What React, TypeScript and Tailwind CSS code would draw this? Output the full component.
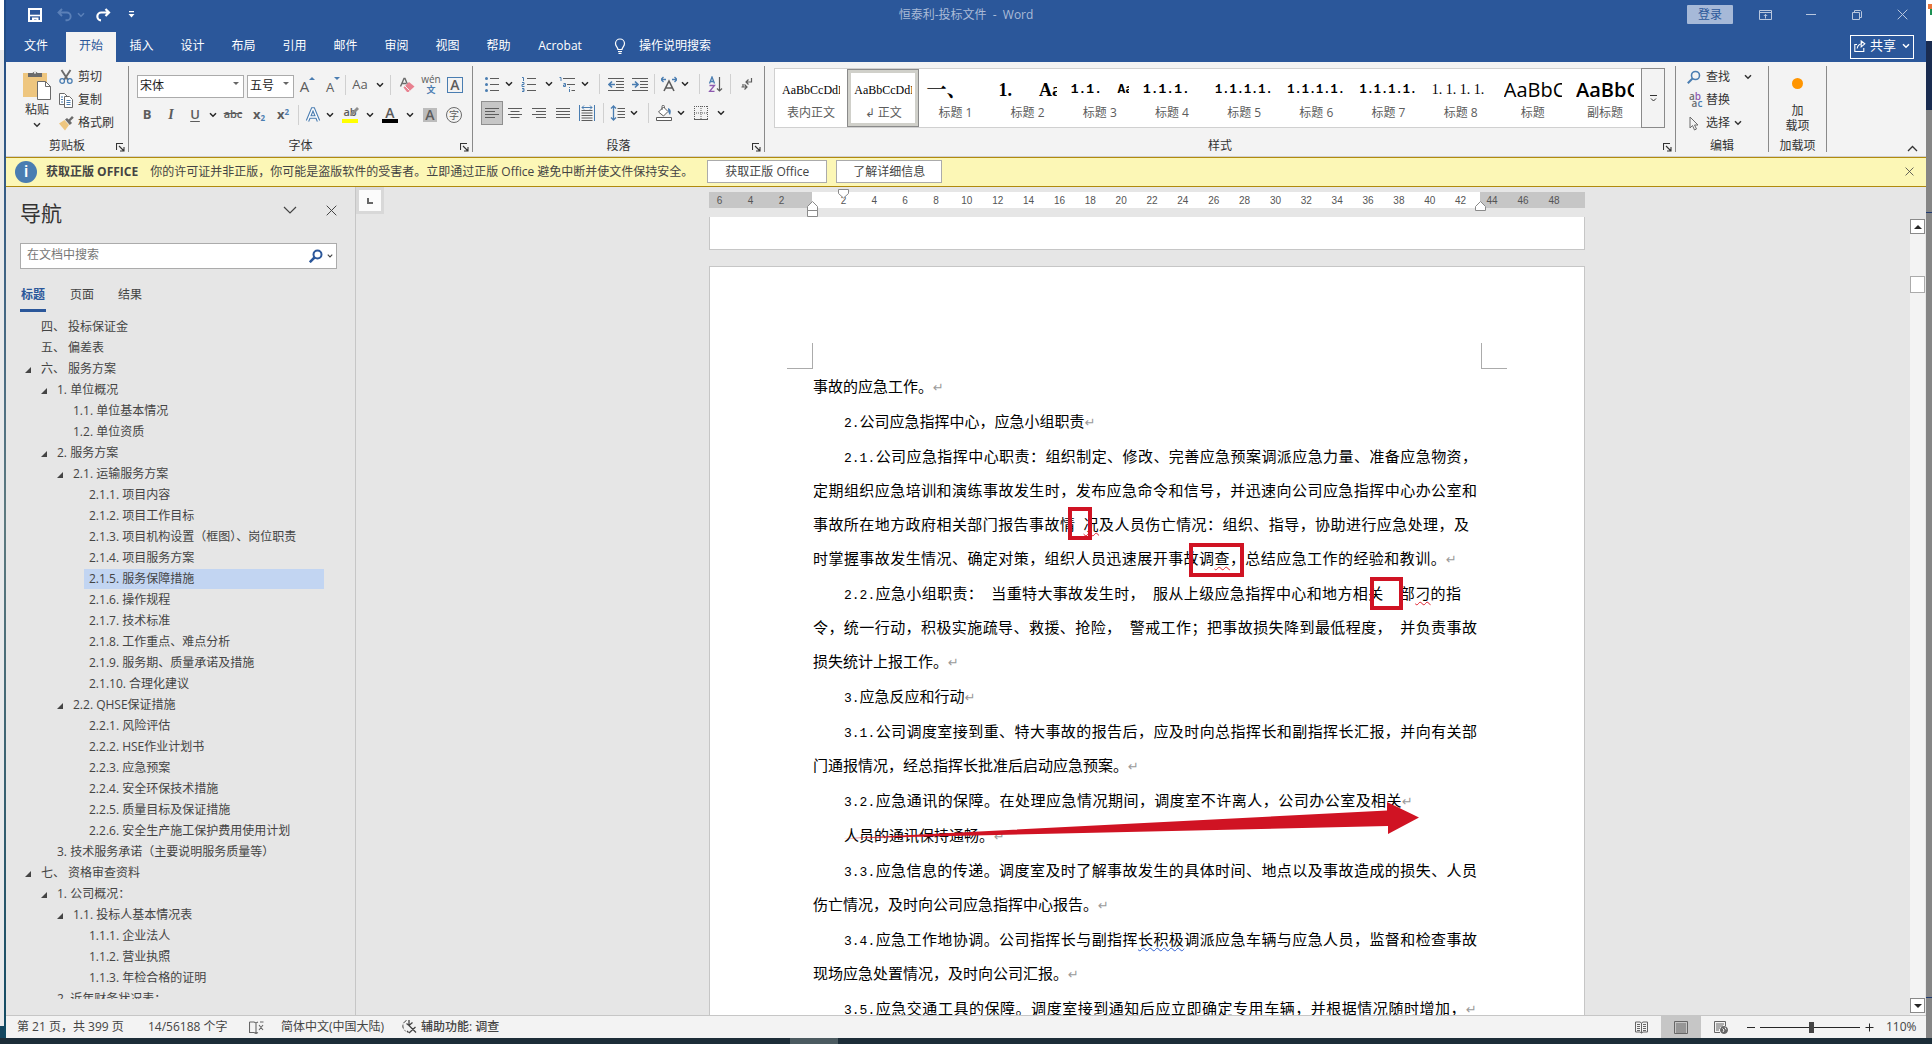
import React from 'react';
import type { ReactNode } from 'react';
import clsx from 'clsx';

/* ---------- small shared pieces ---------- */

function Chev({ className }: { className?: string }) {
  return (
    <svg viewBox="0 0 8 6" className={clsx('h-[6px] w-2 shrink-0', className)} fill="none" stroke="currentColor" strokeWidth="1.5">
      <path d="M1 1.2 4 4.2 7 1.2" />
    </svg>
  );
}

function Caret({ label }: { label: string }) {
  return (
    <button aria-label={label} className="flex h-6 w-3 shrink-0 items-center justify-center text-[#262626]">
      <Chev />
    </button>
  );
}

function Tool({ label, className = 'w-6', children }: { label: string; className?: string; children: ReactNode }) {
  return (
    <button aria-label={label} className={clsx('flex h-6 shrink-0 items-center justify-center text-[#5c5c5c]', className)}>
      {children}
    </button>
  );
}

function Rule({ className }: { className: string }) {
  return <span className={clsx('h-5 w-px shrink-0 bg-[#d0d0d0]', className)} />;
}

function Icon({ children, size = 'size-4', box = '0 0 16 16' }: { children: ReactNode; size?: string; box?: string }) {
  return (
    <svg viewBox={box} className={clsx('shrink-0', size)} fill="none" stroke="currentColor" strokeWidth="1" aria-hidden="true">
      {children}
    </svg>
  );
}

function Launcher() {
  return (
    <button aria-label="更多选项" className="absolute right-[3px] bottom-0 text-[#333]">
      <Icon size="size-[9px]" box="0 0 9 9">
        <path d="M.5 7V.5H7M3 3l4.5 4.5M8 4v4H4" strokeWidth="1.1" />
      </Icon>
    </button>
  );
}

function Group({ title, launcher, className, children }: { title: string; launcher?: boolean; className: string; children: ReactNode }) {
  return (
    <section className={clsx('relative my-1 flex flex-col border-r border-[#8a8a8a]', className)}>
      <div className="flex-1">{children}</div>
      <div className="h-3 text-center text-xs leading-3 text-[#333]">{title}</div>
      {launcher && <Launcher />}
    </section>
  );
}

function CloseIcon({ size = 'size-[11px]' }: { size?: string }) {
  return (
    <Icon size={size} box="0 0 11 11">
      <path d="M.7.7l9.6 9.6M10.3.7.7 10.3" />
    </Icon>
  );
}

function Magnifier({ className, strokeWidth = 2 }: { className: string; strokeWidth?: number }) {
  return (
    <svg viewBox="0 0 14 14" className={className} fill="none" stroke="currentColor" aria-hidden="true">
      <circle cx="8.5" cy="5.5" r="4" strokeWidth={strokeWidth * 0.8} />
      <path d="M5.5 8.5.8 13.2" strokeWidth={strokeWidth} />
    </svg>
  );
}

/* ---------- title bar and tabs ---------- */

function TitleBar() {
  return (
    <header className="relative flex h-8 shrink-0 items-center bg-[#2b579a] pb-[3px] text-white">
      <button aria-label="保存" className="ml-[22px]">
        <Icon size="size-[14px]" box="0 0 14 14">
          <path d="M1 1h12v12H1z" strokeWidth="2" />
          <path d="M2 7.5h10" strokeWidth="1.6" />
          <path d="M5 10v4M4 10.5h5.5V14" strokeWidth="2" />
        </Icon>
      </button>
      <button aria-label="撤消" className="ml-[15px] text-[#5b80b8]">
        <Icon size="h-[14px] w-[15px]" box="0 0 15 14">
          <path d="M5 1 1.5 4.5 5 8M1.8 4.5H9.5a3.8 3.8 0 0 1 .5 7.8H8.5" strokeWidth="1.9" />
        </Icon>
      </button>
      <Chev className="ml-[5px] text-[#5b80b8]" />
      <button aria-label="恢复" className="ml-[11px]">
        <Icon size="h-[14px] w-[15px]" box="0 0 15 14">
          <path d="M9.5 1 13 4.5 9.5 8M13 4.5H5.5a3.8 3.8 0 0 0-.5 7.8" strokeWidth="2.2" />
        </Icon>
      </button>
      <button aria-label="自定义快速访问工具栏" className="ml-[17px]">
        <svg viewBox="0 0 7 7" className="size-[7px]" fill="currentColor">
          <path d="M1 0h5v1.2H1zM.5 3h6L3.5 6.4z" />
        </svg>
      </button>
      <h1 className="absolute inset-x-0 text-center text-xs text-[#aabbd7]">恒泰利-投标文件&nbsp; -&nbsp; Word</h1>
      <div className="relative ml-auto flex items-center text-[#b9c7de]">
        <button className="h-[19px] w-[46px] rounded-[1px] bg-[#a6b9d8] text-xs leading-[18px] text-[#2b579a]">登录</button>
        <button aria-label="功能区显示选项" className="ml-[26px]">
          <Icon size="h-[10px] w-[13px]" box="0 0 13 10">
            <path d="M.5.5h12v9H.5zM.5 2.5h12M6.5 8.5v-4M4.8 6l1.7-1.7L8.2 6" />
          </Icon>
        </button>
        <button aria-label="最小化" className="ml-[34px] h-3 w-[10px]"><span className="block h-px bg-current" /></button>
        <button aria-label="向下还原" className="ml-9">
          <Icon size="size-[10px]" box="0 0 10 10">
            <path d="M.5 2.5h7v7h-7zM2.5 2V.5h6l1 1v6H8" />
          </Icon>
        </button>
        <button aria-label="关闭" className="mr-[18px] ml-[35px]"><CloseIcon size="size-[11px]" /></button>
      </div>
    </header>
  );
}

const TABS = ['插入', '设计', '布局', '引用', '邮件', '审阅', '视图', '帮助'];

function TabRow() {
  return (
    <nav className="flex h-[30px] shrink-0 items-stretch bg-[#2b579a] text-xs text-white">
      <button className="w-[60px] pb-0.5">文件</button>
      <button className="w-[50px] bg-[#f3f3f3] pb-0.5 text-[#2b579a]">开始</button>
      {TABS.map(tab => (
        <button key={tab} className="w-[51px] pb-0.5">{tab}</button>
      ))}
      <button className="w-[72px] pb-0.5">Acrobat</button>
      <button className="ml-[18px] flex items-center gap-[13px] pb-0.5">
        <Icon size="h-4 w-3" box="0 0 12 16">
          <path d="M4 11.5c0-2-2.5-3-2.5-6a4.5 4.5 0 0 1 9 0c0 3-2.5 4-2.5 6zM4 13.5h4M4.5 15.3h3" strokeWidth="1.2" />
        </Icon>
        操作说明搜索
      </button>
      <button className="mt-[3px] mr-3 ml-auto flex h-6 w-16 items-center justify-center gap-1 border border-white pb-0.5 text-[13px]">
        <Icon size="size-3" box="0 0 12 12">
          <path d="M3 4.5H.8v7h9V8M3.2 8.5c.4-3 2.3-4.500 5-4.700M7.200 1l3.600 2.800L7.200 6.800z" strokeWidth="1.1" />
        </Icon>
        共享
        <Chev className="ml-0.5" />
      </button>
    </nav>
  );
}

/* ---------- ribbon ---------- */

function ClipboardGroup() {
  return (
    <Group title="剪贴板" launcher className="w-[123px]">
      <div className="flex">
        <button className="mt-1 ml-3 flex w-[38px] flex-col items-center text-xs leading-4 text-[#333]">
          <svg viewBox="0 0 28 30" className="h-[30px] w-7" aria-hidden="true">
            <path d="M0 3h24v24H0z" fill="#eec67f" />
            <path d="M5 7V3h4.500a3 3 0 0 1 5 0H19v4z" fill="#6b6b6b" />
            <circle cx="12" cy="2.800" r="1" fill="#f3f3f3" />
            <path d="M14.500 11.500h8l5 5v13h-13z" fill="#fff" stroke="#6b6b6b" />
            <path d="M22.500 11.500v5h5" fill="none" stroke="#6b6b6b" />
          </svg>
          <span className="mt-0.5">粘贴</span>
          <Chev className="mt-1" />
        </button>
        <div className="flex flex-col pl-0.5 text-xs text-[#333]">
          <button className="flex h-[22px] items-center gap-1">
            <svg viewBox="0 0 16 16" className="size-4" fill="none" aria-hidden="true">
              <path d="M3.500 1 10 11M12.500 1 6 11" stroke="#6b6b6b" strokeWidth="1.900" />
              <circle cx="4.200" cy="12" r="2.300" stroke="#4a7db1" strokeWidth="1.300" />
              <circle cx="11.800" cy="12" r="2.300" stroke="#4a7db1" strokeWidth="1.300" />
            </svg>
            剪切
          </button>
          <button className="flex h-6 items-center gap-1">
            <svg viewBox="0 0 16 16" className="size-4" fill="#fff" stroke="#6b6b6b" aria-hidden="true">
              <path d="M1.500 1.500h5l3 3v8h-8z" />
              <path d="M6.500 4.500h5l3 3v8h-8z" />
              <path d="M3 5h2M3 7.500h2M3 10h2M8.500 8.500h4M8.500 10.500h4M8.500 12.500h4" stroke="#4a7db1" />
            </svg>
            复制
          </button>
          <button className="flex h-[22px] items-center gap-1">
            <svg viewBox="0 0 16 16" className="size-4" aria-hidden="true">
              <path d="M1 8.500 6.500 5l4.500 5-4 5.500z" fill="#eec67f" />
              <path d="m7 4.500 2-1.500 1.700 1.500L14 1l1.800 1.800-3.500 3.200L14 8l-2.200 2z" fill="#6b6b6b" />
            </svg>
            格式刷
          </button>
        </div>
      </div>
    </Group>
  );
}

function FontGroup() {
  return (
    <Group title="字体" launcher className="w-[344px]">
      <div className="flex items-center pt-[6px] pl-2">
        <div className="relative">
          <select aria-label="字体" defaultValue="宋体" className="h-[23px] w-[107px] appearance-none border border-[#ababab] bg-white pl-0.5 text-xs text-[#222]">
            <option>宋体</option>
          </select>
          <span className="pointer-events-none absolute top-[10px] right-[5px] border-x-[3px] border-t-[3px] border-x-transparent border-t-[#666]" />
        </div>
        <div className="relative ml-[3px]">
          <select aria-label="字号" defaultValue="五号" className="h-[23px] w-[47px] appearance-none border border-[#ababab] bg-white pl-0.5 text-xs text-[#222]">
            <option>五号</option>
          </select>
          <span className="pointer-events-none absolute top-[10px] right-[5px] border-x-[3px] border-t-[3px] border-x-transparent border-t-[#666]" />
        </div>
        <Tool label="增大字号" className="w-[27px]">
          <span className="pt-0.5 text-[15px] leading-4">A</span>
          <span className="mb-3 border-x-[3px] border-b-[3px] border-x-transparent border-b-[#4a7db1]" />
        </Tool>
        <Tool label="减小字号">
          <span className="pt-1 text-[13px] leading-4">A</span>
          <span className="mb-3 border-x-[3px] border-t-[3px] border-x-transparent border-t-[#4a7db1]" />
        </Tool>
        <Rule className="" />
        <Tool label="更改大小写" className="w-7"><span className="text-[13px]">Aa</span></Tool>
        <Caret label="大小写选项" />
        <Rule className="mx-1" />
        <Tool label="清除所有格式">
          <svg viewBox="0 0 16 16" className="size-4" aria-hidden="true">
            <path d="M1.500 9.500 5 1.500h1l2.500 6M3 6.500h4" fill="none" stroke="#6b6b6b" strokeWidth="1.400" />
            <path d="M4.500 10.500 10 5l5.500 4.500-6 5.500H8z" fill="#e8808f" />
            <path d="m6 9 4.500 4.500" stroke="#f3f3f3" />
          </svg>
        </Tool>
        <Tool label="拼音指南">
          <span className="flex flex-col items-center">
            <span className="text-[10px] leading-[9px]">wén</span>
            <span className="text-[9px] leading-[11px] font-bold text-[#4a7db1]">文</span>
          </span>
        </Tool>
        <Tool label="字符边框">
          <span className="size-4 border border-[#4a7db1] text-[14px] leading-[14px] font-semibold">A</span>
        </Tool>
      </div>
      <div className="flex items-center pt-[5px] pl-[6px]">
        <Tool label="加粗"><b className="text-[13px]">B</b></Tool>
        <Tool label="倾斜"><i className="font-['Liberation_Serif'] text-[14px] font-bold">I</i></Tool>
        <Tool label="下划线"><span className="text-[13px] font-semibold underline underline-offset-2">U</span></Tool>
        <Caret label="下划线选项" />
        <Tool label="删除线" className="w-7"><s className="text-[11px] font-semibold">abc</s></Tool>
        <Tool label="下标"><span className="text-[13px] font-bold">x<sub className="text-[8px] text-[#4a7db1]">2</sub></span></Tool>
        <Tool label="上标"><span className="text-[13px] font-bold">x<sup className="text-[8px] text-[#4a7db1]">2</sup></span></Tool>
        <Rule className="mx-[3px]" />
        <Tool label="文本效果" className="w-[22px]">
          <Icon>
            <path d="m2.500 14 5-12h1l5 12M4.500 10h7" stroke="#4a7db1" strokeWidth="3.600" />
            <path d="m2.500 14 5-12h1l5 12M4.500 10h7" stroke="#fff" strokeWidth="1.400" />
          </Icon>
        </Tool>
        <Caret label="文本效果选项" />
        <Tool label="突出显示" className="w-7">
          <span className="relative h-4 w-4 border-b-4 border-[#ffff00] text-[11px] leading-[10px] font-semibold">
            ab
            <svg viewBox="0 0 10 10" className="absolute top-0 -right-px size-[10px]"><path d="M8 0l2 2-6 6-3 1 1-3z" fill="#8c8c8c" /></svg>
          </span>
        </Tool>
        <Caret label="突出显示选项" />
        <Tool label="字体颜色" className="w-7">
          <span className="h-4 w-4 border-b-4 border-black text-[14px] leading-[12px] font-semibold">A</span>
        </Tool>
        <Caret label="字体颜色选项" />
        <Tool label="字符底纹" className="w-7"><span className="h-[14px] w-[14px] bg-[#bcbcbc] text-[14px] leading-[14px] font-semibold">A</span></Tool>
        <Tool label="带圈字符" className="w-5"><span className="size-4 rounded-full border border-[#6b6b6b] text-[10px] leading-[14px]">字</span></Tool>
      </div>
    </Group>
  );
}

function ParagraphGroup() {
  return (
    <Group title="段落" launcher className="w-[292px]">
      <div className="flex items-center pt-[6px] pl-2">
        <Tool label="项目符号" className="w-[22px]">
          <Icon>
            <path d="M6 2.500h9M6 8.500h9M6 14.500h9" />
            <g fill="#4a7db1" stroke="none"><circle cx="2.500" cy="2.500" r="1.500" /><circle cx="2.500" cy="8.500" r="1.500" /><circle cx="2.500" cy="14.500" r="1.500" /></g>
          </Icon>
        </Tool>
        <Caret label="项目符号选项" />
        <Tool label="编号" className="w-7">
          <Icon>
            <path d="M6 2.500h9M6 8.500h9M6 14.500h9" />
            <path d="M1 1.500h1.500V5M1 6.500h2v2H1v2h2.500M1 12.500h2v3H1M1.500 14H3" stroke="#4a7db1" />
          </Icon>
        </Tool>
        <Caret label="编号选项" />
        <Tool label="多级列表">
          <Icon>
            <path d="M4 2.500h12M8 8.500h8M12.500 14.500H16" />
            <path d="M.5 1.500H2V5M4.500 7.500h2v3h-2v-1.500h2M10.500 11v1M10.500 13v3" stroke="#4a7db1" />
          </Icon>
        </Tool>
        <Caret label="多级列表选项" />
        <Rule className="mr-1 ml-2" />
        <Tool label="减少缩进量">
          <Icon>
            <path d="M0 2.500h16M8 5.500h8M8 8.500h8M8 11.500h8M0 14.500h16" />
            <path d="M7 8.500H1.500M4 5.500l-3 3 3 3" stroke="#4a7db1" strokeWidth="1.700" />
          </Icon>
        </Tool>
        <Tool label="增加缩进量">
          <Icon>
            <path d="M0 2.500h16M8 5.500h8M8 8.500h8M8 11.500h8M0 14.500h16" />
            <path d="M0 8.500h5.500M3 5.500l3 3-3 3" stroke="#4a7db1" strokeWidth="1.700" />
          </Icon>
        </Tool>
        <Rule className="mr-1 ml-0.5" />
        <Tool label="中文版式" className="w-5">
          <Icon>
            <path d="m3 15 5-10 5 10M5 12h6" strokeWidth="1.600" />
            <path d="M0 3.500h5M2.500 1 0 3.500 2.500 6M11 3.500h5M13.500 1 16 3.500 13.500 6" stroke="#4a7db1" strokeWidth="1.300" />
          </Icon>
        </Tool>
        <Caret label="中文版式选项" />
        <Rule className="mr-1 ml-2" />
        <Tool label="排序">
          <Icon>
            <path d="m1.500 7.500 2.500-6.500 2.500 6.500M2.500 5.500h3" stroke="#4a7db1" strokeWidth="1.300" />
            <path d="M1.500 9.500h5l-5 6h5" stroke="#8e5bb0" strokeWidth="1.300" />
            <path d="M11.500 1v14M9 12.500l2.500 2.500 2.500-2.500" strokeWidth="1.200" />
          </Icon>
        </Tool>
        <Rule className="mr-1 ml-0.5" />
        <Tool label="显示编辑标记">
          <Icon size="size-3" box="0 0 12 12">
            <path d="M10.500 0v4H5M7.500 1.500 5 4l2.500 2.500M.5 9H6M3.500 6.500 6 9l-2.500 2.500M2 6v2.500" strokeWidth="1.200" />
          </Icon>
        </Tool>
      </div>
      <div className="flex items-center pt-[5px] pl-2">
        <Tool label="左对齐" className="w-[22px] border border-[#8f8f8f] bg-[#c6c6c6]">
          <Icon box="0 0 16 14"><path d="M1 2.500h14M1 5.500h10M1 8.500h14M1 11.500h10" /></Icon>
        </Tool>
        <Tool label="居中"><Icon box="0 0 16 14"><path d="M1 2.500h14M3.500 5.500h9M1 8.500h14M3.500 11.500h9" /></Icon></Tool>
        <Tool label="右对齐"><Icon box="0 0 16 14"><path d="M1 2.500h14M5 5.500h10M1 8.500h14M5 11.500h10" /></Icon></Tool>
        <Tool label="两端对齐"><Icon box="0 0 16 14"><path d="M1 2.500h14M1 5.500h14M1 8.500h14M1 11.500h14" /></Icon></Tool>
        <Tool label="分散对齐">
          <Icon>
            <path d="M2.500 5.500h11M2.500 8h11M2.500 10.500h11M2.500 13h11M2.500 15.500h11" />
            <path d="M.5 0v16M15.500 0v16M3 2.500h10M5 .5l-2 2 2 2M11 .5l2 2-2 2" stroke="#4a7db1" />
          </Icon>
        </Tool>
        <Rule className="mx-1" />
        <Tool label="行和段落间距" className="w-5">
          <Icon>
            <path d="M7.500 3.500H15M7.500 6.500H15M7.500 9.500H15M7.500 12.500H15" />
            <path d="M3.500 1v14M1 3.500 3.500 1 6 3.500M1 12.500 3.500 15 6 12.500" stroke="#4a7db1" strokeWidth="1.300" />
          </Icon>
        </Tool>
        <Caret label="行距选项" />
        <Rule className="mr-1 ml-2" />
        <Tool label="底纹" className="w-[22px]">
          <Icon>
            <path d="M.5 12.500h15v3H.5z" fill="#fff" />
            <path d="m2.500 7 5-5 4.500 4.500-4.500 4.500zM6 5V1.500a1.200 1.200 0 0 1 2.400 0V3" fill="#fff" />
            <path d="M12 3c3 1 3.500 3.500 2 7-1-1.500-2-2.500-2-7z" fill="#4a7db1" stroke="none" />
          </Icon>
        </Tool>
        <Caret label="底纹选项" />
        <Tool label="边框" className="w-7">
          <Icon><path d="M1.500 1v14M14.500 1v14M8 1v14M1 1.500h14M1 8h14" strokeDasharray="1 1" /><path d="M1 14.500h14" /></Icon>
        </Tool>
        <Caret label="边框选项" />
      </div>
    </Group>
  );
}

const SERIF = "font-['Liberation_Serif','Noto_Serif_CJK_SC','Noto_Sans_CJK_SC',serif]";
const MONO = "font-['Liberation_Mono','Noto_Sans_CJK_SC',monospace]";

const STYLES = [
  { name: '表内正文', sample: 'AaBbCcDdE', look: clsx(SERIF, 'text-[12px]') },
  { name: '正文', sample: 'AaBbCcDdE', look: clsx(SERIF, 'text-[12px]'), active: true },
  { name: '标题 1', sample: '一、', look: clsx(SERIF, 'text-[20px] font-bold') },
  { name: '标题 2', sample: '1.\u00a0\u00a0\u00a0\u00a0\u00a0\u00a0Aa', look: clsx(SERIF, 'text-[18px] font-bold') },
  { name: '标题 3', sample: '1.1.\u00a0\u00a0Aa', look: clsx(MONO, 'text-[13px] font-bold') },
  { name: '标题 4', sample: '1.1.1.', look: clsx(MONO, 'text-[13px] font-bold') },
  { name: '标题 5', sample: '1.1.1.1.', look: clsx(MONO, 'text-[12px] font-bold') },
  { name: '标题 6', sample: '1.1.1.1.', look: clsx(MONO, 'text-[12px] font-bold') },
  { name: '标题 7', sample: '1.1.1.1.', look: clsx(MONO, 'text-[12px] font-bold') },
  { name: '标题 8', sample: '1. 1. 1. 1.', look: clsx(SERIF, 'text-[14px]') },
  { name: '标题', sample: 'AaBbC', look: 'text-[20px]' },
  { name: '副标题', sample: 'AaBbC', look: 'text-[20px] font-semibold' },
];

function StylesGroup() {
  return (
    <Group title="样式" launcher className="min-w-0 flex-1">
      <div className="mt-0.5 mr-[10px] ml-[9px] flex h-[60px] border border-[#d0d0d0] bg-white">
        <div className="flex min-w-0 flex-1 overflow-hidden">
          {STYLES.map(s => (
            <button
              key={s.name}
              className={clsx(
                'flex min-w-[72px] flex-1 flex-col items-center text-xs',
                s.active && 'outline-1 -outline-offset-1 outline-[#8a8a8a] ring-4 ring-[#d0d0ca] ring-inset',
              )}
            >
              <span className={clsx('mt-2 h-7 w-[58px] overflow-hidden text-left leading-[26px] whitespace-nowrap text-black', s.look)}>{s.sample}</span>
              <span className="leading-4 text-[#5c5c5c]">{s.active ? '↲ ' : ''}{s.name}</span>
            </button>
          ))}
        </div>
        <button aria-label="其他样式" className="-my-px -mr-px flex w-6 items-center justify-center border border-[#8a8a8a] bg-[#f3f3f3] text-[#333]">
          <Icon size="size-[7px]" box="0 0 7 7"><path d="M0 .5h7M1 3.500 3.500 6 6 3.500" /></Icon>
        </button>
      </div>
    </Group>
  );
}

function EditingGroup() {
  return (
    <Group title="编辑" className="w-[93px]">
      <div className="flex flex-col pl-[11px] text-xs text-[#333]">
        <button className="flex h-[22px] items-center">
          <Magnifier className="mr-[5px] size-[14px] text-[#4a7db1]" />
          查找
          <Chev className="ml-[14px]" />
        </button>
        <button className="flex h-6 items-center">
          <span className="mr-[3px] flex w-4 flex-col text-[10px] leading-[7px] font-semibold text-[#6b6b6b]">
            <span>a<span className="text-[#8e5bb0]">b</span></span>
            <span className="pl-1">a<span className="text-[#4a7db1]">c</span></span>
          </span>
          替换
        </button>
        <button className="flex h-[22px] items-center">
          <span className="mr-[5px] flex w-[14px] justify-center text-[#6b6b6b]">
            <Icon size="h-[15px] w-[10px]" box="0 0 10 15"><path d="M1 1v11l2.500-2.500L5.500 14l2-1-2-4H9z" /></Icon>
          </span>
          选择
          <Chev className="ml-1" />
        </button>
      </div>
    </Group>
  );
}

function Ribbon() {
  return (
    <div className="relative flex h-[95px] shrink-0 border-b border-[#d2d0ce] bg-[#f3f3f3]">
      <ClipboardGroup />
      <FontGroup />
      <ParagraphGroup />
      <StylesGroup />
      <EditingGroup />
      <Group title="加载项" className="mr-[99px] w-[58px]">
        <button className="flex w-full flex-col items-center pt-3 text-xs leading-[15px] text-[#333]">
          <span className="mb-[14px] size-[11px] rounded-full bg-[#ff9500]" />
          <span>加</span>
          <span>载项</span>
        </button>
      </Group>
      <button aria-label="折叠功能区" className="absolute right-2 bottom-1 text-[#333]">
        <Icon size="h-[7px] w-[11px]" box="0 0 11 7"><path d="m1 6 4.500-4.500L10 6" strokeWidth="1.300" /></Icon>
      </button>
    </div>
  );
}

function LicenseBar() {
  return (
    <div role="alert" className="flex h-[30px] shrink-0 items-center border-y border-[#b08a0e] bg-[#fcf7b6] pb-px text-xs text-[#444]">
      <span className="ml-[9px] flex size-[22px] items-center justify-center rounded-full bg-[#4a7db1] text-[17px] font-semibold text-white">i</span>
      <strong className="ml-[9px]">获取正版 OFFICE</strong>
      <span className="ml-3">你的许可证并非正版，你可能是盗版软件的受害者。立即通过正版 Office 避免中断并使文件保持安全。</span>
      <button className="ml-[14px] h-[23px] w-[120px] border border-[#ababab] bg-white">获取正版 Office</button>
      <button className="ml-[9px] h-[23px] w-[106px] border border-[#ababab] bg-white">了解详细信息</button>
      <button aria-label="关闭此消息" className="mr-3 ml-auto"><CloseIcon size="size-[9px]" /></button>
    </div>
  );
}

/* ---------- navigation pane ---------- */

const OUTLINE: { level: number; text: string; open?: boolean; current?: boolean }[] = [
  { level: 0, text: '四、 投标保证金' },
  { level: 0, text: '五、 偏差表' },
  { level: 0, text: '六、 服务方案', open: true },
  { level: 1, text: '1. 单位概况', open: true },
  { level: 2, text: '1.1. 单位基本情况' },
  { level: 2, text: '1.2. 单位资质' },
  { level: 1, text: '2. 服务方案', open: true },
  { level: 2, text: '2.1. 运输服务方案', open: true },
  { level: 3, text: '2.1.1. 项目内容' },
  { level: 3, text: '2.1.2. 项目工作目标' },
  { level: 3, text: '2.1.3. 项目机构设置（框图）、岗位职责' },
  { level: 3, text: '2.1.4. 项目服务方案' },
  { level: 3, text: '2.1.5. 服务保障措施', current: true },
  { level: 3, text: '2.1.6. 操作规程' },
  { level: 3, text: '2.1.7. 技术标准' },
  { level: 3, text: '2.1.8. 工作重点、难点分析' },
  { level: 3, text: '2.1.9. 服务期、质量承诺及措施' },
  { level: 3, text: '2.1.10. 合理化建议' },
  { level: 2, text: '2.2. QHSE保证措施', open: true },
  { level: 3, text: '2.2.1. 风险评估' },
  { level: 3, text: '2.2.2. HSE作业计划书' },
  { level: 3, text: '2.2.3. 应急预案' },
  { level: 3, text: '2.2.4. 安全环保技术措施' },
  { level: 3, text: '2.2.5. 质量目标及保证措施' },
  { level: 3, text: '2.2.6. 安全生产施工保护费用使用计划' },
  { level: 1, text: '3. 技术服务承诺（主要说明服务质量等）' },
  { level: 0, text: '七、 资格审查资料', open: true },
  { level: 1, text: '1. 公司概况：', open: true },
  { level: 2, text: '1.1. 投标人基本情况表', open: true },
  { level: 3, text: '1.1.1. 企业法人' },
  { level: 3, text: '1.1.2. 营业执照' },
  { level: 3, text: '1.1.3. 年检合格的证明' },
  { level: 1, text: '2. 近年财务状况表：' },
];

const INDENT = ['ml-[14px]', 'ml-[30px]', 'ml-[46px]', 'ml-[62px]'];

function NavPane() {
  return (
    <aside className="flex w-[350px] shrink-0 flex-col border-r border-[#c6c6c6] text-[#444]">
      <div className="flex items-center pt-2 pr-[18px] pl-[14px]">
        <h2 className="text-[21px] leading-9 text-[#333]">导航</h2>
        <button aria-label="任务窗格选项" className="mb-1.5 ml-auto">
          <Icon size="h-2 w-[14px]" box="0 0 14 8"><path d="m1 1 6 6 6-6" strokeWidth="1.200" /></Icon>
        </button>
        <button aria-label="关闭导航" className="mb-1.5 ml-[29px]"><CloseIcon /></button>
      </div>
      <div className="mt-3 mr-[18px] ml-[14px] flex h-[26px] shrink-0 items-center border border-[#ababab] bg-white pr-[3px] pl-1.5">
        <input aria-label="在文档中搜索" placeholder="在文档中搜索" className="min-w-0 flex-1 pb-0.5 text-xs outline-none placeholder:text-[#767676]" />
        <Magnifier className="mr-1 size-[14px] text-[#2b579a]" strokeWidth={2.5} />
        <Chev className="w-[6px]" />
      </div>
      <div className="mt-[15px] ml-[14px] flex h-7 shrink-0 gap-6 text-xs">
        <button className="border-b-3 border-[#2b579a] px-px pb-[3px] font-bold text-[#2b579a]">标题</button>
        <button className="pb-[6px]">页面</button>
        <button className="pb-[6px]">结果</button>
      </div>
      <ul className="mt-1.5 mb-4 min-h-0 flex-1 overflow-hidden text-xs leading-5">
        {OUTLINE.map(item => (
          <li key={item.text} className={clsx('mb-px flex h-5', INDENT[item.level])}>
            <span className="flex w-4 items-center pl-[5px]">
              {item.open && <svg viewBox="0 0 6 6" className="size-[6px]" fill="#444"><path d="M6 0v6H0z" /></svg>}
            </span>
            <a href="#" className={clsx('-mt-px h-5 whitespace-nowrap pl-[5px]', item.current && 'w-60 bg-[#c2d5f2]')}>{item.text}</a>
          </li>
        ))}
      </ul>
    </aside>
  );
}

/* ---------- document ---------- */

const EVEN = Array.from({ length: 21 }, (_, i) => (i + 1) * 2);

function Ruler() {
  return (
    <div className="relative mt-[5px] mb-[9px] flex h-4 w-[876px] shrink-0 bg-white font-['Liberation_Sans',sans-serif] text-[10px] leading-[17px] text-[#555]">
      <div className="flex w-[103px] justify-end bg-[#c6c6c6] pr-[15px] text-center">
        {[6, 4, 2].map(n => <span key={n} className="w-[31px] shrink-0">{n}</span>)}
      </div>
      <div className="flex flex-1 pr-1 pl-4 text-center">
        {EVEN.map(n => <span key={n} className="flex-1">{n}</span>)}
      </div>
      <div className="flex w-[105px] gap-[7px] bg-[#c6c6c6] text-center">
        {[44, 46, 48].map(n => <span key={n} className="w-6">{n}</span>)}
      </div>
      <svg viewBox="0 0 11 10" className="absolute -top-[3px] left-[129px] h-[10px] w-[11px]" fill="#fff" stroke="#8a8a8a"><path d="M.5.5h10v4l-5 4.500-5-4.500z" /></svg>
      <svg viewBox="0 0 11 16" className="absolute top-[9px] left-[98px] h-4 w-[11px]" fill="#fff" stroke="#8a8a8a"><path d="M.5 9.500v-4l5-5 5 5v4zM.5 9.500h10v6H.5z" /></svg>
      <svg viewBox="0 0 11 10" className="absolute top-[9px] right-[99px] h-[10px] w-[11px]" fill="#fff" stroke="#8a8a8a"><path d="M.5 9.500v-4l5-5 5 5v4z" /></svg>
    </div>
  );
}

const FULL = '[text-align-last:justify]';

function Num({ children }: { children: ReactNode }) {
  return <span className="font-['Liberation_Mono',monospace] text-[13px] leading-none font-normal">{children}</span>;
}

function Gap({ n = 1 }: { n?: number }) {
  return <Num>{'\u00a0'.repeat(n)}</Num>;
}

function Typo({ children, grammar }: { children: ReactNode; grammar?: boolean }) {
  return (
    <span className={clsx('underline decoration-wavy decoration-1 underline-offset-2', grammar ? 'decoration-[#2f5fd0]' : 'decoration-[#e0202c]')}>
      {children}
    </span>
  );
}

function Ret() {
  return <span className="font-['DejaVu_Sans',sans-serif] text-[13px] leading-none text-[#9a9a9a]">↵</span>;
}

function Line({ indent, className, children }: { indent?: boolean; className?: string; children: ReactNode }) {
  return <span className={clsx('block h-[34px] whitespace-nowrap', indent && 'pl-[31px]', className)}>{children}</span>;
}

function PageText() {
  return (
    <div className="space-y-px pr-[107px] pl-[103px] font-['Noto_Sans_CJK_SC',sans-serif] text-[15px] leading-[34px] font-normal text-black">
      <p><Line>事故的应急工作。<Ret /></Line></p>
      <p><Line indent><Num>2.</Num>公司应急指挥中心，应急小组职责<Ret /></Line></p>
      <p>
        <Line indent className={FULL}><Num>2.1.</Num>公司应急指挥中心职责：组织制定、修改、完善应急预案调派应急力量、准备应急物资，</Line>
        <Line className={FULL}>定期组织应急培训和演练事故发生时，发布应急命令和信号，并迅速向公司应急指挥中心办公室和</Line>
        <Line className={clsx(FULL, 'pr-2')}>事故所在地方政府相关部门报告事故情<Gap /><Typo>况</Typo>及人员伤亡情况：组织、指导，协助进行应急处理，及</Line>
        <Line className={clsx(FULL, 'pr-5')}>时掌握事故发生情况、确定对策，组织人员迅速展开事故调<Typo>查</Typo>，总结应急工作的经验和教训。<Ret /></Line>
      </p>
      <p>
        <Line indent className={clsx(FULL, 'pr-4')}><Num>2.2.</Num>应急小组职责：<Gap />当重特大事故发生时，<Gap />服从上级应急指挥中心和地方相关<Gap n={2} />部<Typo>刁</Typo>的指</Line>
        <Line className={FULL}>令，统一行动，积极实施疏导、救援、抢险，<Gap />警戒工作；把事故损失降到最低程度，<Gap />并负责事故</Line>
        <Line>损失统计上报工作。<Ret /></Line>
      </p>
      <p><Line indent><Num>3.</Num>应急反应和行动<Ret /></Line></p>
      <p>
        <Line indent className={FULL}><Num>3.1.</Num>公司调度室接到重、特大事故的报告后，应及时向总指挥长和副指挥长汇报，并向有关部</Line>
        <Line>门通报情况，经总指挥长批准后启动应急预案。<Ret /></Line>
      </p>
      <p><Line indent className={clsx(FULL, 'pr-16')}><Num>3.2.</Num>应急通讯的保障。在处理应急情况期间，调度室不许离人，公司办公室及相关<Ret /></Line></p>
      <p><Line indent>人员的通讯保持通畅。<Ret /></Line></p>
      <p>
        <Line indent className={FULL}><Num>3.3.</Num>应急信息的传递。调度室及时了解事故发生的具体时间、地点以及事故造成的损失、人员</Line>
        <Line>伤亡情况，及时向公司应急指挥中心报告。<Ret /></Line>
      </p>
      <p>
        <Line indent className={FULL}><Num>3.4.</Num>应急工作地协调。公司指挥长与副指挥<Typo grammar>长积极</Typo>调派应急车辆与应急人员，监督和检查事故</Line>
        <Line>现场应急处置情况，及时向公司汇报。<Ret /></Line>
      </p>
      <p><Line indent className={FULL}><Num>3.5.</Num>应急交通工具的保障。调度室接到通知后应立即确定专用车辆，并根据情况随时增加，<Ret /></Line></p>
    </div>
  );
}

/* red review marks drawn over the page */
function Marks() {
  return (
    <>
      <span className="absolute top-[240px] left-[358px] h-[33px] w-6 border-4 border-[#d01323]" />
      <span className="absolute top-[276px] left-[479px] h-[34px] w-[55px] border-4 border-[#d01323]" />
      <span className="absolute top-[310px] left-[660px] h-[33px] w-[33px] border-4 border-[#d01323]" />
      <svg viewBox="0 0 576 40" className="absolute top-[534px] left-[133px] h-10 w-[576px]" fill="#d01323">
        <path d="M0 37.500 544 9.500V1l32 15.500L545 33v-8z" />
      </svg>
    </>
  );
}

function DocumentArea() {
  return (
    <main className="flex min-w-0 flex-1 flex-col items-center overflow-hidden">
      <Ruler />
      <div className="mb-4 h-[33px] w-[876px] shrink-0 border-x border-b border-[#c6c6c6] bg-white" />
      <article className="relative w-[876px] shrink-0 border border-[#c6c6c6] bg-white pt-[76px] pb-20">
        <div className="flex justify-between px-[77px]">
          <span className="size-[26px] border-r border-b border-[#ababab]" />
          <span className="size-[26px] border-b border-l border-[#ababab]" />
        </div>
        <PageText />
        <Marks />
      </article>
    </main>
  );
}

function ScrollBar() {
  return (
    <div className="mt-8 mr-px flex w-[15px] shrink-0 flex-col bg-[#f3f3f3]">
      <button aria-label="向上滚动" className="flex h-[15px] items-center justify-center border border-[#8a8a8a] bg-white">
        <span className="border-x-4 border-b-4 border-x-transparent border-b-[#262626]" />
      </button>
      <div className="mt-[42px] h-[17px] border border-[#ababab] bg-white" />
      <button aria-label="向下滚动" className="mt-auto mb-0.5 flex h-[15px] items-center justify-center border border-[#8a8a8a] bg-white">
        <span className="border-x-4 border-t-4 border-x-transparent border-t-[#262626]" />
      </button>
    </div>
  );
}

/* ---------- status bar ---------- */

function StatusBar() {
  return (
    <footer className="flex h-[23px] shrink-0 items-stretch border-t border-[#c6c6c6] bg-[#f3f3f3] pl-[11px] text-xs text-[#444]">
      <button className="w-[131px] pb-px text-left">第 21 页，共 399 页</button>
      <button className="w-[101px] pb-px text-left">14/56188 个字</button>
      <button aria-label="校对" className="w-8 text-[#666]">
        <Icon size="h-[13px] w-[15px]" box="0 0 15 13">
          <path d="M7 2v10.500M.5 1h4.500l2 1 2-1M.5 1v10.500H5l2 1 2-1M10 4l4 5M14 4l-4 5M14.500 1H11" strokeWidth="1.100" />
        </Icon>
      </button>
      <button className="w-[121px] pb-px text-left">简体中文(中国大陆)</button>
      <button className="flex items-center gap-1 pb-px font-medium">
        <Icon size="size-[15px]" box="0 0 15 15">
          <path d="M4.500 1.500A6 6 0 0 0 3.500 12" strokeDasharray="4 1.500" />
          <path d="M7 1v5M4.500 4.500 7 6.500l3.500-3M7 6.500l7 7M13.500 8 7 14M5 12l1.500 1.500" strokeWidth="1.300" />
        </Icon>
        辅助功能: 调查
      </button>
      <button aria-label="阅读视图" className="ml-auto flex w-10 items-center justify-center text-[#666]">
        <Icon size="h-[13px] w-[13px]" box="0 0 13 13">
          <path d="M.5 1H5l1.500 1L8 1h4.500v10H8l-1.500 1L5 11H.5zM6.500 2v10M2 3.500h3M2 5.500h3M2 7.500h3M8 3.500h3M8 5.500h3M8 7.500h3M2 9.500h3M8 9.500h3" />
        </Icon>
      </button>
      <button aria-label="页面视图" className="flex w-10 items-center justify-center bg-[#c6c6c6] text-[#666]">
        <Icon size="h-[13px] w-[14px]" box="0 0 14 13">
          <path d="M.5.5h13v12H.5zM2 3h10M2 5h10M2 7h10M2 9h10M2 11h10" />
        </Icon>
      </button>
      <button aria-label="Web 版式视图" className="flex w-10 items-center justify-center text-[#666]">
        <Icon size="h-[13px] w-[14px]" box="0 0 14 13">
          <path d="M6 11.500H.5V.5h11V5M2 3h8M2 5h7M2 7h4M2 9h3" />
          <circle cx="10" cy="9" r="3.500" fill="#666" />
          <path d="M8.500 7.500 10 9l-1 2M11 6.500l1 2" stroke="#f3f3f3" />
        </Icon>
      </button>
      <button aria-label="缩小" className="ml-[6px] w-2"><span className="block h-px bg-[#262626]" /></button>
      <input
        type="range"
        aria-label="缩放"
        defaultValue={52}
        className="mx-[5px] w-[100px] appearance-none bg-[linear-gradient(#262626,#262626)] bg-[length:100%_1px] bg-center bg-no-repeat [&::-webkit-slider-thumb]:h-[11px] [&::-webkit-slider-thumb]:w-[5px] [&::-webkit-slider-thumb]:appearance-none [&::-webkit-slider-thumb]:bg-[#444]"
      />
      <button aria-label="放大" className="text-[#262626]">
        <Icon size="size-[9px]" box="0 0 9 9"><path d="M4.500.5v8M.5 4.500h8" /></Icon>
      </button>
      <button className="mr-1 ml-3 w-9 pb-px text-left">110%</button>
    </footer>
  );
}

/* slivers of the desktop behind the window */
function LeftEdge() {
  return (
    <div className="flex w-[6px] shrink-0 bg-[#14465f]">
      <div className="mb-3 flex w-1 flex-col bg-[#e9eaec]">
        <span className="h-[50px] bg-white" />
      </div>
      <span className="w-0.5 bg-linear-to-b from-[#1f4a86] via-[#5d7a80] to-[#0f4a63]" />
    </div>
  );
}

function RightEdge() {
  return (
    <div className="flex w-[6px] shrink-0 flex-col bg-[#858585]">
      <span className="h-[41px] bg-white pt-1">
        <span className="ml-0.5 block h-[5px] bg-[#e8743a]" />
        <span className="ml-1 block h-[6px] bg-[#1b9152]" />
      </span>
      <span className="h-[69px] bg-[#1a2c50]" />
      <span className="mt-[102px] h-px bg-[#1f3a70]" />
      <span className="mt-auto mb-10 h-px bg-[#1f3a70]" />
    </div>
  );
}

export default function App() {
  return (
    <div className="flex h-screen flex-col overflow-hidden bg-[#1c2d38] font-['Open_Sans','Noto_Sans_CJK_SC',sans-serif]">
      <div className="flex min-h-0 flex-1">
        <LeftEdge />
        <div className="flex min-w-0 flex-1 flex-col bg-[#e6e6e6]">
          <TitleBar />
          <TabRow />
          <Ribbon />
          <LicenseBar />
          <div className="flex min-h-0 flex-1">
            <NavPane />
            <div className="h-[27px] w-7 shrink-0 bg-[#d8d8d8] p-[3px]">
              <button aria-label="制表符" className="flex h-[21px] w-[22px] items-center justify-center bg-[#fbfbfb]">
                <span className="size-[6px] border-b-2 border-l-2 border-[#666]" />
              </button>
            </div>
            <DocumentArea />
            <ScrollBar />
          </div>
          <StatusBar />
        </div>
        <RightEdge />
      </div>
      <div className="h-[6px] shrink-0 pl-[790px]">
        <span className="block h-full w-12 bg-[#4b5a60]" />
      </div>
    </div>
  );
}
